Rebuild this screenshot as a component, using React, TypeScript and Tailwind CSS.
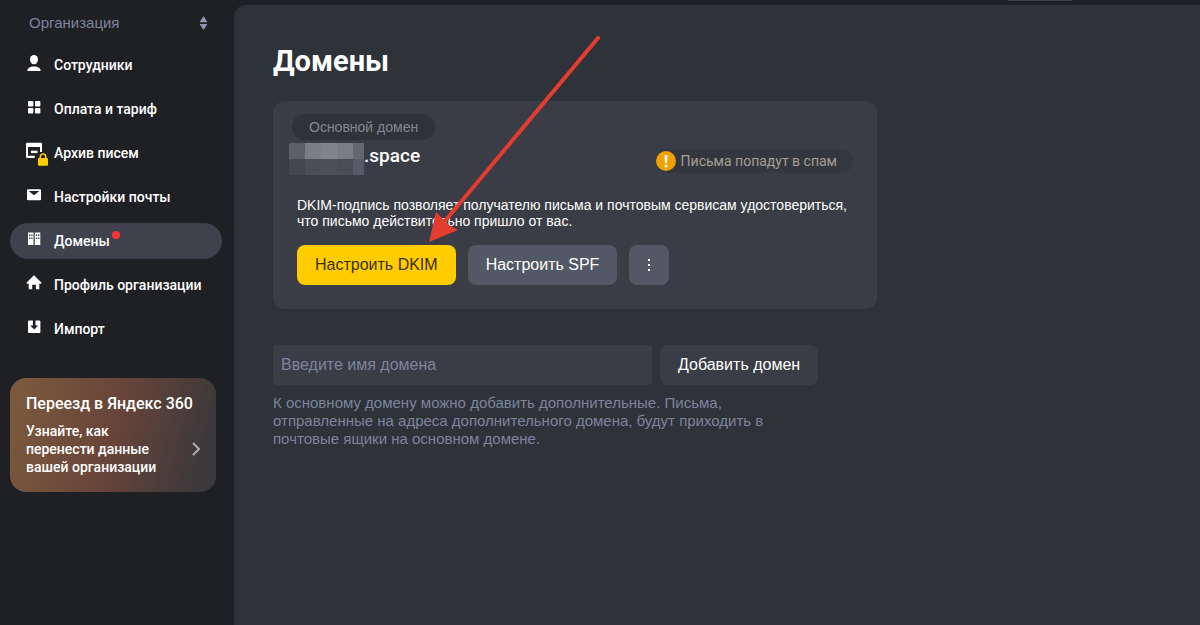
import type { ReactNode } from 'react';
import { clsx } from 'clsx';

interface NavItem {
  label: string;
  href: string;
  icon: ReactNode;
  hasAlert?: boolean;
}

const navItems: NavItem[] = [
  {
    label: 'Сотрудники',
    href: '#staff',
    icon: (
      <>
        <ellipse cx="10" cy="5.600" rx="4" ry="4.700" />
        <path d="M3.500 17c-.6-2.600 2.600-4.500 6.500-4.500s7.100 1.900 6.500 4.500z" />
      </>
    ),
  },
  {
    label: 'Оплата и тариф',
    href: '#billing',
    icon: (
      <>
        <rect x="4" y="3" width="5.400" height="5.400" rx="1" />
        <rect x="11" y="3" width="5.400" height="5.400" rx="1" />
        <rect x="4" y="10" width="5.400" height="5.400" rx="1" />
        <rect x="11" y="10" width="5.400" height="5.400" rx="1" />
      </>
    ),
  },
  {
    label: 'Архив писем',
    href: '#archive',
    icon: (
      <>
        <path d="M3 .8h14a1 1 0 0 1 1 1V10h-2V5H4v8.700h6.700V16H3a1 1 0 0 1-1-1V1.800a1 1 0 0 1 1-1z" />
        <path d="M7 8.700h6.500v2.400H7z" />
        <path d="M16.300 16.500v-1.800a2.700 2.700 0 0 1 5.400 0v1.800" fill="none" stroke="#ffcc00" strokeWidth="1.600" />
        <rect x="14" y="16" width="10" height="7.700" rx="1" fill="#ffcc00" />
      </>
    ),
  },
  {
    label: 'Настройки почты',
    href: '#mail',
    icon: (
      <>
        <rect x="3" y="3.300" width="14" height="11" rx="1" />
        <path d="M4.700 5h10.600L10 9.300z" fill="#1f2023" />
      </>
    ),
  },
  {
    label: 'Домены',
    href: '#domains',
    hasAlert: true,
    icon: (
      <>
        <path d="M4 2.500h5.500V15H4zM10.800 2.500h5.500V15h-5.500z" />
        <path
          d="M5 4.500h1.500V6H5zM7.300 4.500h1.300V6H7.300zM5 7.500h1.500V9H5zM7.300 7.500h1.300V9H7.300zM11.800 4.500h1.400V6h-1.400zM14 4.500h1.400V6H14zM11.800 7.500h1.400V9h-1.400zM14 7.500h1.400V9H14z"
          fill="#3f424c"
        />
      </>
    ),
  },
  {
    label: 'Профиль организации',
    href: '#profile',
    icon: <path d="M10 1.300 17.300 8.500v1.300h-2V15.300h-3.400v-4.500H8.200v4.500H4.700V9.800h-2V8.500z" />,
  },
  {
    label: 'Импорт',
    href: '#import',
    icon: (
      <>
        <rect x="4" y="2.500" width="12.400" height="12.400" rx="1" />
        <path d="M8.900 2h2.600v5.500h2.700l-4 4-4-4h2.700z" fill="#1f2023" />
      </>
    ),
  },
];

function Sidebar({ active }: { active: string }) {
  return (
    <aside className="w-[234px] shrink-0 pl-[10px] pr-3">
      <div className="relative flex h-[47px] items-center pl-[19px] pr-3">
        <select
          aria-label="Раздел"
          className="w-full appearance-none bg-transparent text-[15px] text-[#7d859e] outline-none"
        >
          <option>Организация</option>
        </select>
        <svg
          viewBox="0 0 10 16"
          className="pointer-events-none absolute right-[14px] top-4 h-[14px] w-[9px]"
          fill="#8f97b0"
        >
          <path d="M5 0l4.500 7h-9zM5 16l4.500-7h-9z" />
        </svg>
      </div>

      <nav className="flex flex-col gap-2">
        {navItems.map((item) => (
          <a
            key={item.href}
            href={item.href}
            className={clsx(
              'flex h-9 items-center gap-[10px] rounded-full pl-[14px] font-[Roboto,sans-serif] text-sm font-medium text-white',
              item.label === active && 'bg-[#3f424c]',
            )}
          >
            <svg viewBox="0 0 20 20" className="mb-[2px] size-5 shrink-0 overflow-visible" fill="#ffffff">
              {item.icon}
            </svg>
            <span className="flex gap-[2px]">
              {item.label}
              {item.hasAlert && <span className="size-2 rounded-full bg-[#ff3333]" />}
            </span>
          </a>
        ))}
      </nav>

      <a
        href="#migrate"
        className="mr-[6px] mt-[31px] block rounded-2xl bg-[linear-gradient(105deg,#7b593d_5%,#674439_50%,#3c393b_90%)] px-4 pb-4 pt-4 font-[Roboto,sans-serif] font-medium text-white"
      >
        <h2 className="whitespace-nowrap text-base leading-5">Переезд в Яндекс 360</h2>
        <div className="mt-2 flex items-center justify-between">
          <p className="text-sm leading-[18px]">
            Узнайте, как
            <br />
            перенести данные
            <br />
            вашей организации
          </p>
          <svg viewBox="0 0 8 14" className="h-[14px] w-2" fill="none" stroke="#b0aaa9" strokeWidth="2">
            <path d="M1 1l6 6-6 6" />
          </svg>
        </div>
      </a>
    </aside>
  );
}

// Hides the first part of the domain name
function MaskedName() {
  return (
    <span className="grid grid-cols-[16px_16px_16px_16px_11px] grid-rows-[16px_16px]">
      <span className="bg-[#5d6069]" />
      <span className="bg-[#7b7e87]" />
      <span className="bg-[#808388]" />
      <span className="bg-[#7a7d86]" />
      <span className="bg-[#64676f]" />
      <span className="bg-[#44474f]" />
      <span className="bg-[#4b4e57]" />
      <span className="bg-[#4d5057]" />
      <span className="bg-[#4a4d57]" />
      <span className="bg-[#555b66]" />
    </span>
  );
}

function DomainCard() {
  return (
    <section className="rounded-xl bg-[#3a3d45] px-4 pb-6 pt-[13px]">
      <div className="flex items-start justify-between">
        <div>
          <span className="ml-[3px] flex h-[26px] w-fit items-center rounded-full bg-[#2f3239] px-[17px] text-sm text-[#85878c]">
            Основной домен
          </span>
          <div className="mt-[3px] flex">
            <MaskedName />
            <h2 className="font-[Roboto,sans-serif] text-[19px] font-medium leading-[26px] text-white">.space</h2>
          </div>
        </div>
        <div className="mr-2 mt-[35px] flex h-6 items-center gap-[5px] rounded-full bg-[#34373e] pr-4 font-[Roboto,sans-serif] text-sm text-[#a59f95]">
          <svg viewBox="0 0 20 20" className="size-5">
            <circle cx="10" cy="10" r="10" fill="#f0a000" />
            <path d="M8.500 4h3l-.5 8H9z" fill="#ffffff" />
            <circle cx="10" cy="15" r="1.500" fill="#ffffff" />
          </svg>
          Письма попадут в спам
        </div>
      </div>

      <div className="px-2">
        <p className="mt-[22px] text-sm leading-4 text-white">
          DKIM-подпись позволяет получателю письма и почтовым сервисам удостовериться, что письмо действительно пришло
          от вас.
        </p>
        <div className="mt-4 flex gap-3">
          <button type="button" className="h-10 rounded-lg bg-[#ffcc00] px-[18px] text-base text-[#3b2f00]">
            Настроить DKIM
          </button>
          <button type="button" className="h-10 rounded-lg bg-[#525865] px-[18px] text-base text-white">
            Настроить SPF
          </button>
          <button
            type="button"
            aria-label="Ещё"
            className="flex size-10 items-center justify-center rounded-lg bg-[#525865]"
          >
            <svg viewBox="0 0 2 12" className="h-3 w-[2px]" fill="#ffffff">
              <path d="M0 0h2v2H0zM0 5h2v2H0zM0 10h2v2H0z" />
            </svg>
          </button>
        </div>
      </div>
    </section>
  );
}

function AddDomainForm() {
  return (
    <form className="mt-9" onSubmit={(e) => e.preventDefault()}>
      <div className="flex gap-2">
        <input
          type="text"
          aria-label="Имя домена"
          placeholder="Введите имя домена"
          className="h-10 w-[379px] rounded bg-[#3a3d45] px-2 text-base text-white outline-none placeholder:text-[#7d859e]"
        />
        <button type="submit" className="h-10 rounded-lg bg-[#3a3d45] px-[18px] text-base text-white">
          Добавить домен
        </button>
      </div>
      <p className="mt-[9px] max-w-[500px] text-[15px] leading-[18px] text-[#7d859e]">
        К основному домену можно добавить дополнительные. Письма, отправленные на адреса дополнительного домена, будут
        приходить в почтовые ящики на основном домене.
      </p>
    </form>
  );
}

export default function App() {
  return (
    <div className="relative flex min-h-screen bg-[#1f2023] font-[Liberation_Sans,Arial,sans-serif]">
      <Sidebar active="Домены" />

      <div className="flex flex-1 flex-col">
        <div className="flex h-[5px] justify-end pr-32">
          <div className="h-px w-16 bg-[#3f4043]" />
        </div>
        <main className="flex-1 rounded-tl-xl bg-[#2e3239] px-[39px] pt-9">
          <div className="max-w-[604px]">
            <h1 className="font-[Roboto,sans-serif] text-[29px] font-bold leading-10 text-white">Домены</h1>
            <div className="mt-5">
              <DomainCard />
            </div>
            <AddDomainForm />
          </div>
        </main>
      </div>

      {/* Pointer to the DKIM button */}
      <svg
        viewBox="0 0 172 206"
        className="pointer-events-none absolute left-[429px] top-9 h-[206px] w-[172px]"
        fill="#e53c30"
      >
        <path d="M169 2 16 185" stroke="#e53c30" strokeWidth="4" strokeLinecap="round" />
        <path d="M0 206 7 176 15 184 20 189 29 194z" />
      </svg>
    </div>
  );
}
